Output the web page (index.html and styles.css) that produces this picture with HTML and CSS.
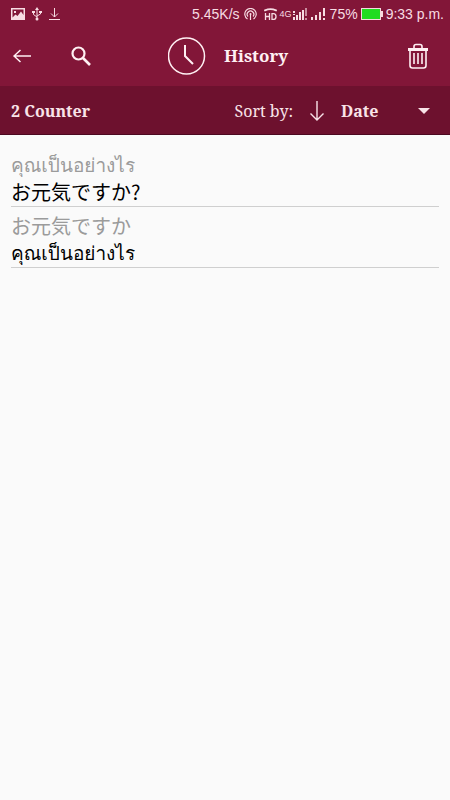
FILE: index.html
```html
<!DOCTYPE html>
<html lang="en">
<head>
<meta charset="utf-8">
<meta name="viewport" content="width=device-width, initial-scale=1">
<title>History</title>
<link rel="stylesheet" href="styles.css">
</head>
<body>
<div class="status">
  <div class="notices">
    <svg width="14" height="12" viewBox="0 0 14 12"><path fill="currentColor" fill-rule="evenodd" d="M0 0h14v12H0zM1.500 1.500v8l3-3 2 1.500 3.500-4.500 2.500 3.500V1.500z"/><path fill="currentColor" d="M3 3h2v2H3z"/></svg>
    <svg width="10" height="14" viewBox="0 0 10 14" fill="none" stroke="currentColor"><path d="M5 2v9M1.500 5v2.500L5 10M8.500 5v2L5 9"/><path fill="currentColor" stroke="none" d="M5 0l2 3H3zM0 4h3v2H0zM7 4h3v2H7z"/><circle cx="5" cy="12" r="1.500" fill="currentColor" stroke="none"/></svg>
    <svg width="12" height="13" viewBox="0 0 12 13" fill="none" stroke="currentColor"><path d="M5.500 0v9M2 5.500L5.500 9 9 5.500M0 11.500h11"/></svg>
  </div>
  <div class="system">
    <span>5.45K/s</span>
    <svg class="hotspot" width="13" height="12" viewBox="0 0 13 12" fill="none" stroke="currentColor" stroke-width="1.200"><path d="M3.500 11a5.700 5.700 0 1 1 6 0M4 8.500a3.300 3.300 0 1 1 5 0M6.500 6v6"/><circle cx="6.500" cy="6" r="1" fill="currentColor" stroke="none"/></svg>
    <svg class="hd" width="13" height="12" viewBox="0 0 13 12" fill="none" stroke="currentColor"><path stroke-width="1.800" d="M1 3.300V2.300Q6.500 0 12 2.300v1"/><path stroke-width="1.300" d="M1.500 5V12M5.500 5V12M1.500 8.500h4M8 5.600h1.500q2.500 0 2.500 2.900t-2.500 2.900H8z"/></svg>
    <span class="network">4G</span>
    <svg class="signal" width="15" height="12" viewBox="0 0 15 12" fill="currentColor"><path d="M1 9h2v3H1zM4 7h2v5H4zM7 4h2v8H7zM10 2h2v10h-2zM1 3h2v2H1zM1 6h2v1H1z"/><path opacity=".6" d="M13 0h2v8h-2zM13 10h2v2h-2z"/></svg>
    <svg class="signal" width="15" height="12" viewBox="0 0 15 12" fill="currentColor"><path d="M0 9h2v3H0zM4 7h2v5H4zM8 4h2v8H8zM12 0h2v8h-2zM12 10h2v2h-2z"/></svg>
    <span>75%</span>
    <svg class="battery" width="22" height="12" viewBox="0 0 22 12"><path fill="#f7d9df" d="M0 0h20v3h2v6h-2v3H0z"/><path fill="#20dc20" d="M1 1h18v10H1z"/></svg>
    <span>9:33 p.m.</span>
  </div>
</div>
<header class="bar">
  <div class="actions">
    <button aria-label="Back"><svg width="18" height="14" viewBox="0 0 18 14" fill="none" stroke="currentColor" stroke-width="1.500"><path d="M0.500 7H18M7.500 1L1 7l6.500 6"/></svg></button>
    <button aria-label="Search"><svg width="20" height="20" viewBox="0 0 20 20" fill="none" stroke="currentColor" stroke-width="2.200"><circle cx="7.500" cy="7.500" r="6"/><path stroke-width="2.600" d="M12 12l7 7"/></svg></button>
  </div>
  <div class="title">
    <svg width="38" height="38" viewBox="0 0 38 38" fill="none" stroke="currentColor" stroke-width="1.500"><circle cx="18.500" cy="19" r="18"/><path stroke-width="2" d="M17 8v11l8 8"/></svg>
    <h1>History</h1>
  </div>
  <button class="delete" aria-label="Delete history"><svg width="20" height="26" viewBox="0 0 20 26" fill="none" stroke="currentColor" stroke-width="1.600"><path d="M6 5V3.500q0-2 2-2h4q2 0 2 2V5"/><path stroke-width="3" d="M0 6.500h20"/><path d="M2 8v14.500Q2 25 4.500 25h11q2.500 0 2.500-2.500V8M6 10v11M10 10v11M14 10v11"/></svg></button>
</header>
<div class="sortbar">
  <strong>2 Counter</strong>
  <div class="sort">
    <label for="sort">Sort by:</label>
    <button class="direction" aria-label="Sort direction"><svg width="14" height="20" viewBox="0 0 14 20" fill="none" stroke="currentColor" stroke-width="1.400"><path d="M7 0v19M0.500 12.500L7 19l6.500-6.500"/></svg></button>
    <div class="field">
      <select id="sort"><option>Date</option></select>
      <svg width="12" height="6" viewBox="0 0 12 6"><path fill="currentColor" d="M0 0h12L6 6z"/></svg>
    </div>
  </div>
</div>
<main>
  <ul class="list">
    <li><p class="source" lang="th">คุณเป็นอย่างไร</p><p lang="ja">お元気ですか?</p></li>
    <li><p class="source" lang="ja">お元気ですか</p><p lang="th">คุณเป็นอย่างไร</p></li>
  </ul>
</main>
</body>
</html>
```
FILE: styles.css
```css
* { box-sizing: border-box; }
body {
  margin: 0;
  min-height: 100vh;
  background: #fafafa;
  color: #000;
  font-family: "Noto Serif", "Droid Serif", "Liberation Serif", serif;
}
svg { display: block; flex: none; }
button {
  padding: 0;
  border: 0;
  background: none;
  color: inherit;
}
.status {
  display: flex;
  justify-content: space-between;
  align-items: center;
  height: 28px;
  padding: 0 6px 0 11px;
  background: #821638;
  color: #f7dce3;
  font: 14px/28px "Liberation Sans", sans-serif;
  white-space: nowrap;
}
.notices, .system { display: flex; align-items: center; }
.notices { gap: 7px; }
.system { gap: 4px; }
.hd { margin-left: 3px; }
.network { font-size: 9px; margin: 0 -4px 0 -1px; }
.battery { margin: 0 -1px; }
.bar {
  display: grid;
  grid-template-columns: 155px 1fr auto;
  align-items: center;
  height: 58px;
  padding: 0 22px 2px 13px;
  background: #821638;
  color: #fff0f3;
}
.actions { display: flex; align-items: center; gap: 40px; }
.title { display: flex; align-items: center; gap: 18px; }
h1 { margin: 0; font-size: 17px; line-height: 24px; }
.sortbar {
  display: flex;
  justify-content: space-between;
  align-items: center;
  height: 49px;
  padding: 2px 20px 0 11px;
  border-bottom: 1px solid #4c0820;
  background: #6d112e;
  color: #f9e3e8;
  font-size: 16px;
}
.sort { display: flex; align-items: center; }
.direction { margin: 0 17px; }
.field { position: relative; width: 89px; }
select {
  display: block;
  width: 100%;
  padding: 0;
  border: 0;
  appearance: none;
  background: none;
  color: inherit;
  font: inherit;
  font-weight: 700;
}
.field svg { position: absolute; right: 0; top: 50%; margin-top: -3px; pointer-events: none; }
.list {
  margin: 0;
  padding: 16px 11px 0;
  list-style: none;
  font: 20px/27px "Noto Sans CJK JP", sans-serif;
}
[lang="th"] {
  padding-top: 2px;
  font-family: "Loma", "Noto Sans Thai Looped", "Garuda", "Waree", "Noto Sans Thai", sans-serif;
  font-size: 19px;
  line-height: 25px;
}
li { padding-bottom: 1px; margin-bottom: 5px; border-bottom: 1px solid #cfcfcf; }
p { margin: 0; }
.source { color: #9b9b9b; }
```
